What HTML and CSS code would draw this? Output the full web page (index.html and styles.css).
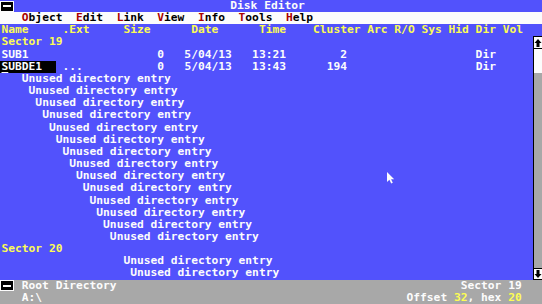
FILE: index.html
```html
<!DOCTYPE html>
<html>
<head>
<meta charset="utf-8">
<title>Disk Editor</title>
<link rel="stylesheet" href="styles.css">
</head>
<body>
<div class="screen">
  <div class="row titlebar">
    <span class="sysicon"><span class="bar"></span></span>
    <span class="title">Disk Editor</span>
  </div>
  <div class="row menubar">
    <span class="item"><b>O</b>bject</span>
    <span class="item"><b>E</b>dit</span>
    <span class="item"><b>L</b>ink</span>
    <span class="item"><b>V</b>iew</span>
    <span class="item"><b>I</b>nfo</span>
    <span class="item"><b>T</b>ools</span>
    <span class="item"><b>H</b>elp</span>
  </div>
  <div class="row txt yellow">Name     .Ext     Size      Date      Time    Cluster Arc R/O Sys Hid Dir Vol</div>
  <div class="middle">
    <div class="list">
      <div class="row txt yellow">Sector 19</div>
      <div class="row txt">SUB1                   0   5/04/13   13:21        2                   Dir</div>
      <div class="row txt"><span class="sel"><u>S</u>UBDE1  </span> ...           0   5/04/13   13:43      194                   Dir</div>
      <div class="row txt">   Unused directory entry</div>
      <div class="row txt">    Unused directory entry</div>
      <div class="row txt">     Unused directory entry</div>
      <div class="row txt">      Unused directory entry</div>
      <div class="row txt">       Unused directory entry</div>
      <div class="row txt">        Unused directory entry</div>
      <div class="row txt">         Unused directory entry</div>
      <div class="row txt">          Unused directory entry</div>
      <div class="row txt">           Unused directory entry</div>
      <div class="row txt">            Unused directory entry</div>
      <div class="row txt">             Unused directory entry</div>
      <div class="row txt">              Unused directory entry</div>
      <div class="row txt">               Unused directory entry</div>
      <div class="row txt">                Unused directory entry</div>
      <div class="row txt yellow">Sector 20</div>
      <div class="row txt">                  Unused directory entry</div>
      <div class="row txt">                   Unused directory entry</div>
    </div>
    <div class="scroll">
      <div class="arrow"><svg width="8" height="10" viewBox="0 0 8 10"><path d="M4 1 L7.5 5 L5.5 5 L5.5 9 L2.5 9 L2.5 5 L0.5 5 Z" fill="#000"/></svg></div>
      <div class="thumb"></div>
      <div class="track"></div>
      <div class="arrow"><svg width="8" height="10" viewBox="0 0 8 10"><path d="M4 9 L7.5 5 L5.5 5 L5.5 1 L2.5 1 L2.5 5 L0.5 5 Z" fill="#000"/></svg></div>
    </div>
  </div>
  <div class="row status">
    <div class="left"><span class="sysicon"><span class="bar"></span></span><span class="label">Root Directory</span></div>
    <span>Sector 19</span>
  </div>
  <div class="row status">
    <span class="path">A:\</span>
    <span>Offset <span class="yellow">32</span>, hex <span class="yellow">20</span></span>
  </div>
  <svg class="pointer" width="8" height="12" viewBox="0 0 8 12"><path d="M0 0 L0 10 L2.4 7.8 L4.2 11.5 L5.8 10.8 L4.1 7.2 L7.2 7.2 Z" fill="#fcfcfc"/></svg>
</div>
</body>
</html>
```
FILE: styles.css
```css
html, body {
  margin: 0;
  padding: 0;
  background: #5454fc;
}

.screen {
  position: relative;
  width: 542px;
  height: 304px;
  overflow: hidden;
  display: flex;
  flex-direction: column;
  background: #5252fc;
  color: #fcfcfc;
  font-family: "DejaVu Sans Mono", "Liberation Mono", monospace;
  font-weight: bold;
  font-size: 11.25px;
  line-height: 12.16px;
}

.row {
  height: 12.16px;
  flex: none;
  white-space: pre;
  overflow: hidden;
}

.txt {
  padding-left: 1.5px;
}

.yellow {
  color: #fcfc54;
}

.titlebar {
  display: flex;
  align-items: center;
}

.title {
  margin-left: 32ch;
}

.sysicon {
  display: inline-flex;
  align-items: center;
  justify-content: center;
  box-sizing: border-box;
  width: 2ch;
  height: 11px;
  background: #000;
  border: 1px solid #fcfcfc;
  vertical-align: top;
}

.sysicon .bar {
  display: block;
  width: 8px;
  height: 2px;
  background: #fcfcfc;
}

.menubar {
  display: flex;
  gap: 2ch;
  padding-left: calc(3ch + 1.5px);
  background: #fcfcfc;
  color: #000;
}

.menubar b {
  color: #a80000;
  font-weight: bold;
}

.middle {
  display: flex;
  height: 243.2px;
  flex: none;
}

.list {
  flex: 1;
  display: flex;
  flex-direction: column;
}

.sel {
  margin-left: -1.5px;
  padding-left: 1.5px;
  background: #000;
  color: #fcfcfc;
}

.sel u {
  text-decoration-thickness: 1px;
  text-underline-offset: 2px;
}

.scroll {
  width: 8px;
  border-left: 1px solid #000;
  display: flex;
  flex-direction: column;
  background: #a8a8a8;
}

.arrow {
  height: 12.16px;
  box-sizing: border-box;
  background: #fcfcfc;
  border-top: 1px solid #000;
  border-bottom: 1px solid #000;
  display: flex;
  align-items: center;
  justify-content: center;
}

.thumb {
  height: 24.3px;
  background: #fcfcfc;
}

.track {
  flex: 1;
}

.status {
  display: flex;
  justify-content: space-between;
  padding-right: 3ch;
  background: #a8a8a8;
  color: #fcfcfc;
}

.status .left {
  display: flex;
  align-items: center;
}

.status .label {
  margin-left: calc(1ch + 1.5px);
}

.status .path {
  padding-left: calc(3ch + 1.5px);
}

.pointer {
  position: absolute;
  left: 387px;
  top: 172px;
}
```
